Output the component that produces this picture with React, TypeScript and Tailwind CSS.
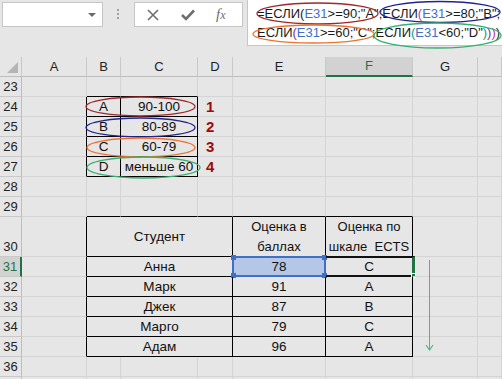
import React from "react";
import clsx from "clsx";

const COLS = "grid grid-cols-[22px_65px_34px_77px_35px_93px_87px_65px_1fr]";

type CellProps = {
  children?: React.ReactNode;
  span3?: boolean;
  r?: boolean;
  b?: boolean;
  tall?: boolean;
  left?: boolean;
  small?: boolean;
  className?: string;
};

function Cell({ children, span3, r, b, tall, left, small, className }: CellProps) {
  return (
    <div
      className={clsx(
        "relative flex items-center whitespace-nowrap border-r border-b leading-[20px] text-[#111]",
        small ? "text-[13px]" : "text-[13.5px]",
        left ? "justify-start" : "justify-center",
        r ? "border-r-black" : "border-r-[#d4d4d4]",
        b ? "border-b-black" : "border-b-[#d4d4d4]",
        tall ? "h-[40px]" : "h-[20px]",
        span3 && "col-span-3",
        className
      )}
    >
      {children}
    </div>
  );
}

function RowHead({ n, tall, active }: { n?: number; tall?: boolean; active?: boolean }) {
  return (
    <div
      className={clsx(
        "flex items-end justify-center border-b border-b-[#c8c8c8] text-[13px] leading-[19px]",
        tall ? "h-[40px]" : "h-[20px]",
        active
          ? "border-r-2 border-r-[#217346] bg-[#d2d2d2] text-[#217346]"
          : "border-r border-r-[#bdbdbd] bg-[#e6e6e6] text-[#222]"
      )}
    >
      {n}
    </div>
  );
}

function ColHead({ l, active }: { l: string; active?: boolean }) {
  return (
    <div
      className={clsx(
        "flex h-[20px] items-center justify-center border-r border-r-[#c8c8c8] text-[13px]",
        active
          ? "border-b-2 border-b-[#217346] bg-[#d2d2d2] text-[#217346]"
          : "border-b border-b-[#bdbdbd] bg-[#e6e6e6] text-[#222]"
      )}
    >
      {l}
    </div>
  );
}

function Tail() {
  return (
    <>
      <Cell />
      <Cell />
    </>
  );
}

function Num({ n }: { n: number }) {
  return <span className="pl-[8px] text-[15px] font-bold text-[#9c0b0b]">{n}</span>;
}

const grades = [
  { l: "A", r: "90-100", n: 1 },
  { l: "B", r: "80-89", n: 2 },
  { l: "C", r: "60-79", n: 3 },
  { l: "D", r: "меньше 60", n: 4 },
];

const students = [
  { name: "Анна", score: 78, ects: "C" },
  { name: "Марк", score: 91, ects: "A" },
  { name: "Джек", score: 87, ects: "B" },
  { name: "Марго", score: 79, ects: "C" },
  { name: "Адам", score: 96, ects: "A" },
];

const E31 = <span className="text-[#3f6fc6]">E31</span>;

export default function App() {
  return (
    <div className="relative h-[379px] w-[502px] overflow-hidden bg-[#e6e6e6] font-['Liberation_Sans',Arial,sans-serif]">
      {/* toolbar */}
      <div className="flex h-[57px] items-start">
        <div className="ml-[2px] mt-[2px] flex h-[25px] w-[101px] items-center justify-end border border-[#c6c6c6] bg-white pr-[6px]">
          <div className="h-0 w-0 border-x-[4px] border-t-[4px] border-x-transparent border-t-[#6a6a6a]" />
        </div>
        <div className="ml-[14px] mt-[9px] flex flex-col gap-[2px]">
          <div className="h-[2px] w-[2px] bg-[#a0a0a0]" />
          <div className="h-[2px] w-[2px] bg-[#a0a0a0]" />
          <div className="h-[2px] w-[2px] bg-[#a0a0a0]" />
        </div>
        <div className="ml-[15px] mt-[2px] flex h-[25px] w-[109px] items-center border border-[#c6c6c6] bg-white text-[#6e6e6e]">
          <svg width="12" height="12" viewBox="0 0 12 12" className="ml-[12px]">
            <path d="M1 1 L11 11 M11 1 L1 11" stroke="#6e6e6e" strokeWidth="1.6" />
          </svg>
          <svg width="14" height="12" viewBox="0 0 14 12" className="ml-[22px]">
            <path d="M1 6 L5 10 L13 1.5" stroke="#6e6e6e" strokeWidth="2.6" fill="none" />
          </svg>
          <span className="ml-[21px] font-['Liberation_Serif',serif] text-[15px] italic leading-none">
            f<span className="text-[12px]">x</span>
          </span>
        </div>
        <div className="ml-[4px] h-[46px] flex-1 border-b border-l border-[#c6c6c6] bg-white pl-[9px] pt-[4px] text-[13px] leading-[19px] text-[#1a1a1a] whitespace-nowrap">
          <div>
            =ЕСЛИ(
            {E31}
            &gt;=90;"A";ЕСЛИ<span className="text-[#c2379d]">(</span>
            {E31}
            &gt;=80;"B";
          </div>
          <div>
            ЕСЛИ<span className="text-[#7a30b0]">(</span>
            {E31}
            &gt;=60;"C";ЕСЛИ<span className="text-[#13a07a]">(</span>
            {E31}
            &lt;60;"D"<span className="text-[#13a07a]">)</span>
            <span className="text-[#7a30b0]">)</span>
            <span className="text-[#c2379d]">)</span>)
          </div>
        </div>
      </div>

      {/* sheet */}
      <div className={COLS}>
        <div className="flex h-[20px] items-end justify-end border-r border-b border-r-[#c8c8c8] border-b-[#bdbdbd] bg-[#e6e6e6] pb-[3px] pr-[3px]">
          <svg width="11" height="11" viewBox="0 0 11 11">
            <path d="M11 0 L11 11 L0 11 Z" fill="#b4b4b4" />
          </svg>
        </div>
        <ColHead l="A" />
        <ColHead l="B" />
        <ColHead l="C" />
        <ColHead l="D" />
        <ColHead l="E" />
        <ColHead l="F" active />
        <ColHead l="G" />
        <ColHead l="" />

        <RowHead n={23} />
        <Cell />
        <Cell b />
        <Cell b />
        <Cell />
        <Cell />
        <Cell />
        <Tail />

        {grades.map((g, i) => (
          <React.Fragment key={g.l}>
            <RowHead n={24 + i} />
            <Cell r />
            <Cell r b>
              {g.l}
            </Cell>
            <Cell r b>
              {g.r}
            </Cell>
            <Cell left>
              <Num n={g.n} />
            </Cell>
            <Cell />
            <Cell />
            <Tail />
          </React.Fragment>
        ))}

        <RowHead n={28} />
        <Cell />
        <Cell />
        <Cell />
        <Cell />
        <Cell />
        <Cell />
        <Tail />

        <RowHead n={29} />
        <Cell />
        <Cell b />
        <Cell b />
        <Cell b />
        <Cell b />
        <Cell b />
        <Tail />

        <RowHead n={30} tall />
        <Cell tall r />
        <Cell tall span3 r b>
          Студент
        </Cell>
        <Cell tall r b small className="flex-col">
          <span>Оценка в</span>
          <span>баллах</span>
        </Cell>
        <Cell tall r b small className="flex-col">
          <span>Оценка по</span>
          <span>шкале&nbsp; ECTS</span>
        </Cell>
        <Cell tall />
        <Cell tall />

        {students.map((s, i) => (
          <React.Fragment key={s.name}>
            <RowHead n={31 + i} active={i === 0} />
            <Cell r />
            <Cell span3 r b>
              {s.name}
            </Cell>
            <Cell r b className={i === 0 ? "bg-[#b4c7e7]" : undefined}>
              {s.score}
              {i === 0 && (
                <div className="absolute -left-[1px] -top-[1px] h-[21px] w-[94px] border-2 border-[#3f6fc6]">
                  <div className="absolute -left-[3px] -top-[3px] h-[5px] w-[5px] bg-[#3f6fc6]" />
                  <div className="absolute -right-[3px] -top-[3px] h-[5px] w-[5px] bg-[#3f6fc6]" />
                  <div className="absolute -bottom-[3px] -left-[3px] h-[5px] w-[5px] bg-[#3f6fc6]" />
                  <div className="absolute -bottom-[3px] -right-[3px] h-[5px] w-[5px] bg-[#3f6fc6]" />
                </div>
              )}
            </Cell>
            <Cell r b>
              {s.ects}
              {i === 0 && (
                <div className="absolute -top-[1px] left-0 h-[21px] w-[89px] border-y-2 border-r-[3px] border-y-[#111] border-r-[#217346]">
                  <div className="absolute -bottom-[3px] -right-[4px] h-[5px] w-[5px] border border-white bg-[#217346]" />
                </div>
              )}
            </Cell>
            <Tail />
          </React.Fragment>
        ))}

        <RowHead n={36} />
        <Cell />
        <Cell />
        <Cell />
        <Cell />
        <Cell />
        <Cell />
        <Tail />

        <RowHead />
        <Cell />
        <Cell />
        <Cell />
        <Cell />
        <Cell />
        <Cell />
        <Tail />
      </div>

      {/* hand-drawn annotations */}
      <svg className="pointer-events-none absolute left-0 top-0" width="502" height="379" fill="none" strokeWidth="1.3">
        <ellipse cx="317.5" cy="13.5" rx="60.5" ry="10.5" stroke="#a3262b" />
        <ellipse cx="440" cy="12" rx="60" ry="10.5" stroke="#23238c" />
        <ellipse cx="313.5" cy="34" rx="60.5" ry="9" stroke="#f0722f" />
        <ellipse cx="437.5" cy="35.5" rx="63.5" ry="12.5" stroke="#36b06e" />

        <ellipse cx="140.5" cy="106.5" rx="54.5" ry="9.5" stroke="#a3262b" />
        <ellipse cx="140.5" cy="127.5" rx="54.5" ry="9.5" stroke="#23238c" />
        <ellipse cx="141" cy="147.5" rx="54" ry="9.5" stroke="#f0722f" />
        <ellipse cx="143.5" cy="167.5" rx="56.5" ry="10.5" stroke="#36b06e" />

        <path d="M429.5 260 L429.5 350" stroke="#4cb87a" strokeWidth="1" />
        <path d="M426 345 L429.5 350 L433 345" stroke="#4cb87a" strokeWidth="1.2" />
      </svg>
    </div>
  );
}
